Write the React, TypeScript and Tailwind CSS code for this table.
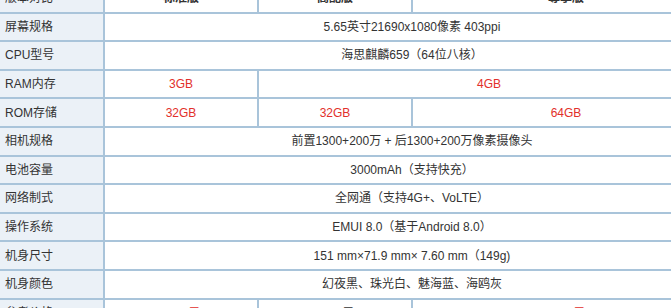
const rows: { label: string; cells: { text: string; span: number; red?: boolean }[] }[] = [
  { label: '屏幕规格', cells: [{ text: '5.65英寸21690x1080像素 403ppi', span: 3 }] },
  { label: 'CPU型号', cells: [{ text: '海思麒麟659（64位八核）', span: 3 }] },
  {
    label: 'RAM内存',
    cells: [
      { text: '3GB', span: 1, red: true },
      { text: '4GB', span: 2, red: true },
    ],
  },
  {
    label: 'ROM存储',
    cells: [
      { text: '32GB', span: 1, red: true },
      { text: '32GB', span: 1, red: true },
      { text: '64GB', span: 1, red: true },
    ],
  },
  { label: '相机规格', cells: [{ text: '前置1300+200万 + 后1300+200万像素摄像头', span: 3 }] },
  { label: '电池容量', cells: [{ text: '3000mAh（支持快充）', span: 3 }] },
  { label: '网络制式', cells: [{ text: '全网通（支持4G+、VoLTE）', span: 3 }] },
  { label: '操作系统', cells: [{ text: 'EMUI 8.0（基于Android 8.0）', span: 3 }] },
  { label: '机身尺寸', cells: [{ text: '151 mm×71.9 mm× 7.60 mm（149g)', span: 3 }] },
  { label: '机身颜色', cells: [{ text: '幻夜黑、珠光白、魅海蓝、海鸥灰', span: 3 }] },
  {
    label: '参考价格',
    cells: [
      { text: '1499元', span: 1, red: true },
      { text: '1699元', span: 1 },
      { text: '1999元', span: 1, red: true },
    ],
  },
];

const spanClass: Record<number, string> = {
  1: 'col-span-1',
  2: 'col-span-2',
  3: 'col-span-3',
};

export default function App() {
  return (
    <div
      className="w-[671px] h-[308px] overflow-hidden bg-white text-[12px] text-[#333]"
      style={{ fontFamily: '"Liberation Sans", "Noto Sans CJK SC", sans-serif' }}
    >
      <div className="-mt-[17px] w-[719px] grid grid-cols-[103px_152px_152px_306px] auto-rows-[26.6px] gap-[2px] bg-[#a9c4da] pt-[2px]">
        {/* header */}
        <div className="bg-[#ebf1f7] flex items-center pl-[5px]">版本对比</div>
        <div className="bg-white flex items-center justify-center font-bold">标准版</div>
        <div className="bg-white flex items-center justify-center font-bold">高配版</div>
        <div className="bg-white flex items-center justify-center font-bold">尊享版</div>

        {rows.map((row) => (
          <div key={row.label} className="contents">
            <div className="bg-[#ebf1f7] flex items-center pl-[5px]">{row.label}</div>
            {row.cells.map((c, i) => (
              <div
                key={i}
                className={`${spanClass[c.span]} bg-white flex items-center justify-center ${
                  c.red ? 'text-[#e2302b]' : ''
                }`}
              >
                {c.text}
              </div>
            ))}
          </div>
        ))}
      </div>
    </div>
  );
}
